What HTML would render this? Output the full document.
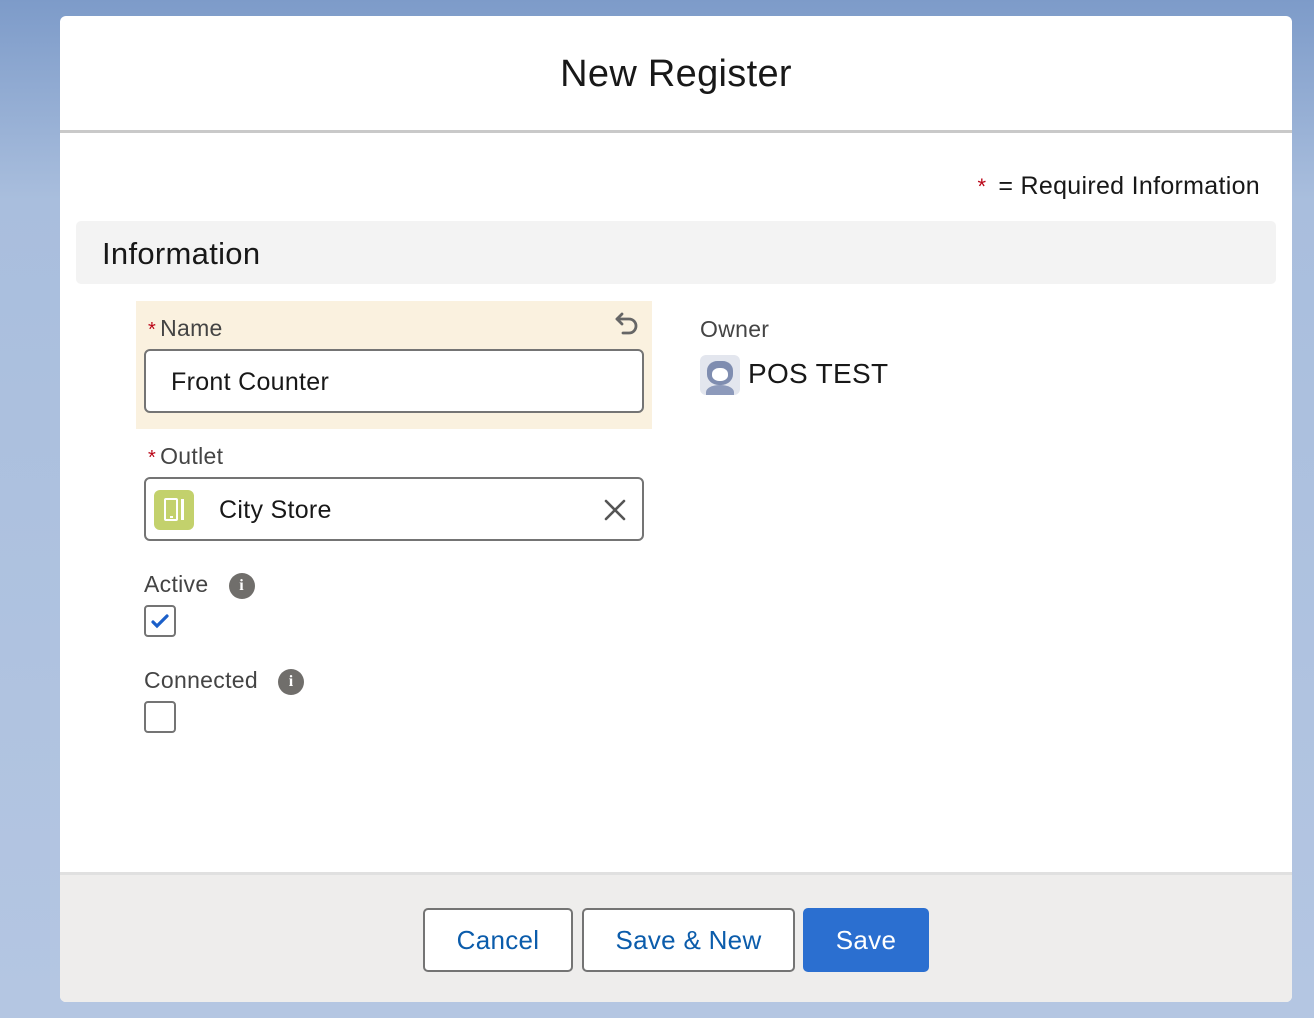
<!DOCTYPE html>
<html><head><style>
*{box-sizing:border-box;margin:0;padding:0}
body{width:1314px;height:1018px;overflow:hidden;font-family:"Liberation Sans",sans-serif;background:linear-gradient(#7d9bc9 0,#a9bedd 200px,#b4c6e2 1018px);position:relative}
.modal{position:absolute;left:60px;top:16px;width:1232px;height:986px;background:#fff;border-radius:6px;overflow:hidden;letter-spacing:0.3px}
.hdr{height:117px;border-bottom:3px solid #c9c9c9;text-align:center;font-size:38px;line-height:116px;color:#181818}
.req{position:absolute;right:32px;top:156px;font-size:25px;color:#181818}
.req b{color:#ba0517;font-weight:normal;margin-right:12px;font-size:22px}
.sec{position:absolute;left:16px;top:205px;width:1200px;height:63px;background:#f3f3f3;border-radius:5px;font-size:31px;line-height:66px;padding-left:26px;color:#181818}
.lbl{position:absolute;font-size:23px;color:#444}
.lbl b{color:#ba0517;font-weight:normal;margin-right:4px;font-size:20px}
.inp{position:absolute;border:2px solid #747474;border-radius:6px;background:#fff;font-size:25px;color:#181818}
.info{display:inline-block;width:26px;height:26px;border-radius:50%;background:#706e6b;color:#fff;font-size:16px;font-weight:bold;text-align:center;line-height:26px;font-family:"Liberation Serif",serif;vertical-align:2px;letter-spacing:0}
.cb{position:absolute;width:32px;height:32px;border:2px solid #747474;border-radius:4px;background:#fff}
.ftr{position:absolute;left:0;top:856px;width:1232px;height:130px;background:#eeedec;border-top:3px solid #e0e0e0}
.btn{position:absolute;top:33px;height:64px;border:2px solid #747474;border-radius:5px;background:#fff;color:#0b5cab;font-size:26px;text-align:center;line-height:60px}
</style></head><body>
<div class="modal">
<div class="hdr">New Register</div>
<div class="req"><b>*</b>= Required Information</div>
<div class="sec">Information</div>
<div style="position:absolute;left:76px;top:285px;width:516px;height:128px;background:#faf1df"></div>
<div class="lbl" style="left:88px;top:299px"><b>*</b>Name</div>
<svg style="position:absolute;left:554px;top:294px" width="28" height="28" viewBox="0 0 28 28" fill="none" stroke="#666" stroke-width="2.8" stroke-linecap="round" stroke-linejoin="round"><path d="M8 4L3 9l5 5"/><path d="M3 9h12a7 7 0 010 14h-6"/></svg>
<div class="inp" style="left:84px;top:333px;width:500px;height:64px;line-height:62px;padding-left:25px">Front Counter</div>
<div class="lbl" style="left:88px;top:427px"><b>*</b>Outlet</div>
<div class="inp" style="left:84px;top:461px;width:500px;height:64px;line-height:62px;padding-left:73px">City Store
<div style="position:absolute;left:8px;top:11px;width:40px;height:40px;background:#c3d16c;border-radius:6px"><div style="position:absolute;left:10px;top:8px;width:14px;height:23px;border:2.5px solid #fff;border-radius:2px"></div><div style="position:absolute;left:15.5px;top:26px;width:3px;height:2px;background:#fff"></div><div style="position:absolute;left:27px;top:9px;width:3px;height:21px;background:#fff"></div></div>
<svg style="position:absolute;left:458px;top:20px" width="22" height="22" viewBox="0 0 22 22" stroke="#555" stroke-width="2.6" stroke-linecap="round"><path d="M2 2l18 18M20 2L2 20"/></svg>
</div>
<div class="lbl" style="left:84px;top:555px">Active &nbsp; <span class="info">i</span></div>
<div class="cb" style="left:84px;top:589px"><svg width="28" height="28" viewBox="0 0 28 28"><path d="M7 15l4 4 10-10" fill="none" stroke="#1b5fc9" stroke-width="3.2" stroke-linecap="round"/></svg></div>
<div class="lbl" style="left:84px;top:651px">Connected &nbsp; <span class="info">i</span></div>
<div class="cb" style="left:84px;top:685px"></div>
<div class="lbl" style="left:640px;top:300px">Owner</div>
<div style="position:absolute;left:640px;top:339px;width:40px;height:40px;background:#e3e6ee;border-radius:6px;overflow:hidden"><div style="position:absolute;left:7px;top:6px;width:26px;height:24px;background:#7f8db0;border-radius:40% 40% 45% 45%"></div><div style="position:absolute;left:12px;top:13px;width:16px;height:13px;background:#fff;border-radius:45%"></div><div style="position:absolute;left:6px;top:30px;width:28px;height:14px;background:#8d9abb;border-radius:50% 50% 0 0"></div></div>
<div style="position:absolute;left:688px;top:342px;font-size:28px;color:#181818">POS TEST</div>
<div class="ftr">
<div class="btn" style="left:363px;width:150px">Cancel</div>
<div class="btn" style="left:522px;width:213px">Save &amp; New</div>
<div class="btn" style="left:743px;width:126px;background:#2b6fd0;border-color:#2b6fd0;color:#fff">Save</div>
</div>
</div>
</body></html>
